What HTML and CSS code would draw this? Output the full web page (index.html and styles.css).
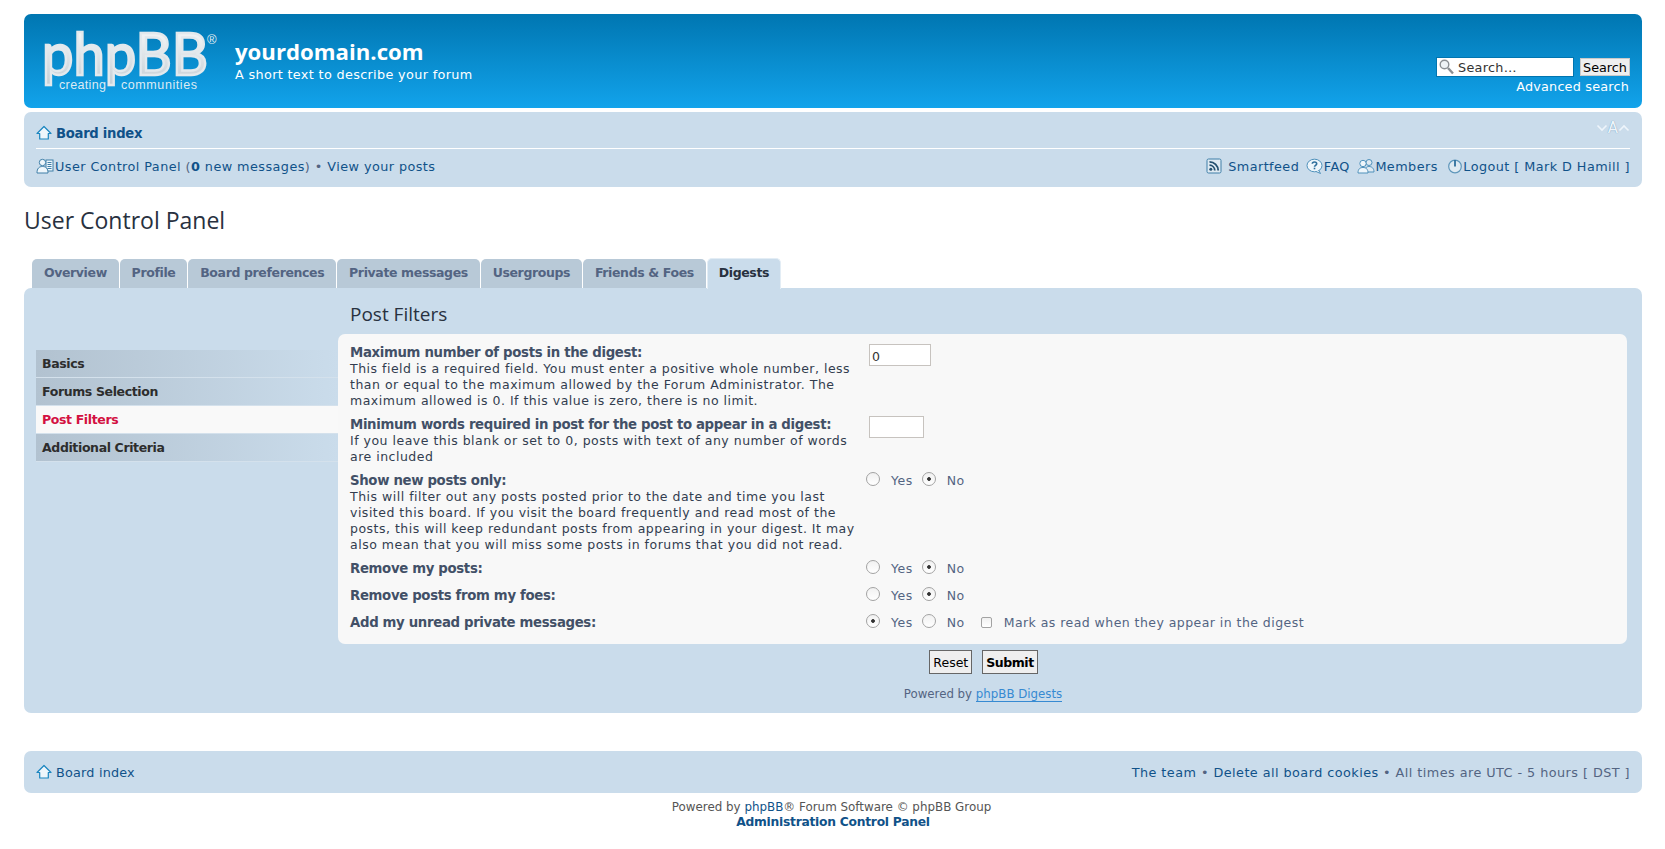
FILE: index.html
```html
<!DOCTYPE html>
<html lang="en">
<head>
    <meta charset="UTF-8">
    <meta name="viewport" content="width=device-width, initial-scale=1.0">
    <title>yourdomain.com - User Control Panel</title>
    <link rel="stylesheet" href="styles.css">
</head>
<body>
    <svg class="sprites" width="0" height="0">
        <symbol id="i-home" viewBox="0 0 16 16">
            <path d="M8 1.500 15 8.500H12.300V14H3.700V8.500H1Z" fill="#eef6fb" stroke="#1a86c0" stroke-width="1.200" stroke-linejoin="round"/>
        </symbol>
        <symbol id="i-ucp" viewBox="0 0 18 16">
            <rect x="10" y="2" width="7" height="11" fill="#eef6fb" stroke="#3f7fa8"/>
            <path d="M11.500 4.500H15.500M11.500 6.500H15.500M11.500 8.500H15.500M11.500 10.500H15.500" stroke="#3f7fa8"/>
            <circle cx="6.500" cy="4.500" r="3.200" fill="#eef6fb" stroke="#3f7fa8"/>
            <path d="M1 15C1 10.500 3 8.500 6.500 8.500S12 10.500 12 15Z" fill="#eef6fb" stroke="#3f7fa8"/>
        </symbol>
        <symbol id="i-rss" viewBox="0 0 16 16">
            <rect x="1" y="1" width="14" height="14" rx="1.500" fill="#dfeaf2" stroke="#3f7fa8"/>
            <circle cx="4.800" cy="11.200" r="1.500" fill="#24506f"/>
            <path d="M3.500 7.200A5.500 5.500 0 0 1 8.800 12.500M3.500 3.800A8.800 8.800 0 0 1 12.200 12.500" fill="none" stroke="#24506f" stroke-width="1.800"/>
        </symbol>
        <symbol id="i-faq" viewBox="0 0 18 16">
            <ellipse cx="8.500" cy="7.500" rx="7.500" ry="6.300" fill="#eef6fb" stroke="#4f91bb"/>
            <path d="M10 13.500 14.500 15.500 12.500 12" fill="#eef6fb" stroke="#4f91bb"/>
            <path d="M6.300 5.800C6.300 3.400 10.700 3.400 10.700 5.800 10.700 7.300 8.500 7.300 8.500 8.800" fill="none" stroke="#2f6f9c" stroke-width="1.600"/>
            <rect x="7.700" y="9.700" width="1.600" height="1.600" fill="#2f6f9c"/>
        </symbol>
        <symbol id="i-members" viewBox="0 0 18 16">
            <circle cx="12" cy="4.500" r="3" fill="#dfeaf2" stroke="#4f91bb"/>
            <path d="M8 14C8 10 9.500 8.500 12 8.500S17 10 17 14Z" fill="#dfeaf2" stroke="#4f91bb"/>
            <circle cx="6" cy="5.500" r="3.200" fill="#eef6fb" stroke="#4f91bb"/>
            <path d="M1 15C1 11 3 9.500 6 9.500S11 11 11 15Z" fill="#eef6fb" stroke="#4f91bb"/>
        </symbol>
        <symbol id="i-logout" viewBox="0 0 16 16">
            <circle cx="8" cy="8.500" r="6.300" fill="#dfeaf2" stroke="#5f97bb" stroke-width="1.200"/>
            <path d="M8 2V8.500" stroke="#2f6f9c" stroke-width="1.800"/>
        </symbol>
    </svg>

    <div class="wrap">
        <header class="headerbar">
            <svg class="logo" width="178" height="76" viewBox="0 -10 178 76" role="img" aria-label="phpBB creating communities">
                <defs>
                    <linearGradient id="logo-fill" x1="0" y1="0" x2="0" y2="1">
                        <stop offset="0" stop-color="#ffffff"/>
                        <stop offset="1" stop-color="#c3cdd4"/>
                    </linearGradient>
                </defs>
                <text class="logo-word" x="-1" y="44" textLength="166" lengthAdjust="spacingAndGlyphs" fill="url(#logo-fill)">phpBB</text>
                <text class="logo-reg" x="164" y="13">®</text>
                <text class="logo-sub" x="16" y="58" textLength="47">creating</text>
                <text class="logo-sub" x="78" y="58" textLength="76">communities</text>
            </svg>
            <div class="site-description">
                <h1>yourdomain.com</h1>
                <p>A short text to describe your forum</p>
            </div>
            <div class="search-box">
                <div class="search-row">
                    <label class="search-field">
                        <svg width="15" height="16" viewBox="0 0 15 16">
                            <circle cx="5.500" cy="5.500" r="4.300" fill="#eef2f5" stroke="#8b8f93" stroke-width="1.400"/>
                            <path d="M9 9 14 14.500" stroke="#8b8f93" stroke-width="2.400"/>
                        </svg>
                        <input type="text" placeholder="Search…">
                    </label>
                    <button class="search-button">Search</button>
                </div>
                <a href="#">Advanced search</a>
            </div>
        </header>

        <nav class="navbar">
            <div class="nav-top">
                <a class="crumb" href="#"><svg class="icon"><use href="#i-home"/></svg>Board index</a>
                <span class="font-size">
                    <svg width="12" height="8" viewBox="0 0 12 8"><path d="M1.500 1.500 6 6 10.500 1.500" fill="none" stroke="#eef5fb" stroke-width="1.600"/></svg>
                    <b>A</b>
                    <svg width="12" height="8" viewBox="0 0 12 8"><path d="M1.500 6.500 6 2 10.500 6.500" fill="none" stroke="#eef5fb" stroke-width="1.600"/></svg>
                </span>
            </div>
            <div class="nav-links">
                <div>
                    <svg class="icon icon-wide icon-ucp"><use href="#i-ucp"/></svg><a href="#">User Control Panel</a>
                    <span class="muted">(<a href="#"><strong>0</strong> new messages</a>) • </span><a href="#">View your posts</a>
                </div>
                <div class="nav-right">
                    <svg class="icon"><use href="#i-rss"/></svg><a class="gap-left" href="#">Smartfeed</a>
                    <svg class="icon icon-wide icon-faq"><use href="#i-faq"/></svg><a href="#">FAQ</a>
                    <svg class="icon icon-wide icon-members"><use href="#i-members"/></svg><a href="#">Members</a>
                    <svg class="icon icon-logout"><use href="#i-logout"/></svg><a href="#">Logout [ Mark D Hamill ]</a>
                </div>
            </div>
        </nav>

        <h2 class="page-title">User Control Panel</h2>

        <ul class="tabs">
            <li class="tab"><a href="#">Overview</a></li>
            <li class="tab"><a href="#">Profile</a></li>
            <li class="tab"><a href="#">Board preferences</a></li>
            <li class="tab"><a href="#">Private messages</a></li>
            <li class="tab"><a href="#">Usergroups</a></li>
            <li class="tab"><a href="#">Friends &amp; Foes</a></li>
            <li class="tab active"><a href="#">Digests</a></li>
        </ul>

        <section class="panel">
            <ul class="side-menu">
                <li><a href="#">Basics</a></li>
                <li><a href="#">Forums Selection</a></li>
                <li class="current"><a href="#">Post Filters</a></li>
                <li><a href="#">Additional Criteria</a></li>
            </ul>

            <div class="main">
                <h3>Post Filters</h3>
                <form class="form-box">
                    <div class="row row-max">
                        <div class="row-label">
                            <strong>Maximum number of posts in the digest:</strong>
                            <span>This field is a required field. You must enter a positive whole number, less than or equal to the maximum allowed by the Forum Administrator. The maximum allowed is 0. If this value is zero, there is no limit.</span>
                        </div>
                        <div><input class="num-input" type="text" value="0"></div>
                    </div>
                    <div class="row row-min">
                        <div class="row-label">
                            <strong>Minimum words required in post for the post to appear in a digest:</strong>
                            <span>If you leave this blank or set to 0, posts with text of any number of words are included</span>
                        </div>
                        <div><input class="num-input short" type="text"></div>
                    </div>
                    <div class="row row-new">
                        <div class="row-label">
                            <strong>Show new posts only:</strong>
                            <span>This will filter out any posts posted prior to the date and time you last visited this board. If you visit the board frequently and read most of the posts, this will keep redundant posts from appearing in your digest. It may also mean that you will miss some posts in forums that you did not read.</span>
                        </div>
                        <div class="choices">
                            <label><input type="radio" name="new"> Yes</label>
                            <label><input type="radio" name="new" checked> No</label>
                        </div>
                    </div>
                    <div class="row row-single">
                        <div class="row-label"><strong>Remove my posts:</strong></div>
                        <div class="choices">
                            <label><input type="radio" name="mine"> Yes</label>
                            <label><input type="radio" name="mine" checked> No</label>
                        </div>
                    </div>
                    <div class="row row-single">
                        <div class="row-label"><strong>Remove posts from my foes:</strong></div>
                        <div class="choices">
                            <label><input type="radio" name="foes"> Yes</label>
                            <label><input type="radio" name="foes" checked> No</label>
                        </div>
                    </div>
                    <div class="row row-single">
                        <div class="row-label"><strong>Add my unread private messages:</strong></div>
                        <div class="choices">
                            <label><input type="radio" name="pm" checked> Yes</label>
                            <label><input type="radio" name="pm"> No</label>
                            <label class="mark"><input type="checkbox"> Mark as read when they appear in the digest</label>
                        </div>
                    </div>
                </form>
                <div class="form-actions">
                    <button type="button">Reset</button>
                    <button type="button" class="primary">Submit</button>
                </div>
                <p class="powered">Powered by <a href="#">phpBB Digests</a></p>
            </div>
        </section>

        <footer class="navbar footbar">
            <a class="foot-index" href="#"><svg class="icon"><use href="#i-home"/></svg>Board index</a>
            <div class="foot-right">
                <a href="#">The team</a> • <a href="#">Delete all board cookies</a> • All times are UTC - 5 hours [ DST ]
            </div>
        </footer>

        <div class="copyright">
            <div>Powered by <a href="#">phpBB</a>® Forum Software © phpBB Group</div>
            <a class="acp" href="#">Administration Control Panel</a>
        </div>
    </div>
</body>
</html>
```

FILE: styles.css
```css
* {
    box-sizing: border-box;
}

body {
    margin: 0;
    font-family: "DejaVu Sans", Verdana, sans-serif;
    font-size: 12.500px;
    color: #536482;
    background-color: #fff;
}

a {
    color: #105289;
    text-decoration: none;
}

.sprites {
    position: absolute;
}

.wrap {
    padding: 14px 23px 0 24px;
}

/* Header */
.headerbar {
    display: flex;
    height: 94px;
    padding: 19px 12px 0 19px;
    color: #fff;
    background: linear-gradient(#0076b1, #12a3eb);
    border-radius: 7px;
}

.logo {
    flex: none;
    margin-top: -12px;
}

.logo-word {
    font-family: Lato, sans-serif;
    font-size: 58px;
    font-weight: 400;
    stroke: #e3e9ed;
    stroke-width: 2.400px;
}

.logo-reg {
    font-family: "Liberation Sans", sans-serif;
    font-size: 13px;
    fill: #e4edf2;
}

.logo-sub {
    font-family: "Liberation Sans", sans-serif;
    font-size: 12.500px;
    fill: #dcebf4;
}

.site-description {
    margin-left: 14px;
    padding-top: 4px;
}

.site-description h1 {
    margin: 0;
    font-family: "Open Sans", sans-serif;
    font-size: 22.200px;
    line-height: 30px;
    font-weight: 700;
}

.site-description p {
    margin: 1px 0 0;
    font-size: 12.800px;
    line-height: 14px;
    letter-spacing: 0.340px;
}

.search-box {
    margin-left: auto;
    padding-top: 24px;
    text-align: right;
}

.search-box a {
    display: block;
    margin-top: 1px;
    padding-right: 1px;
    color: #fff;
    font-size: 12.800px;
    line-height: 18px;
    letter-spacing: 0.200px;
}

.search-row {
    display: flex;
    align-items: center;
    gap: 6px;
    height: 20px;
}

.search-field {
    display: flex;
    align-items: center;
    gap: 4px;
    width: 138px;
    height: 20px;
    padding-left: 2px;
    background-color: #fff;
    border: 1px solid #0075b0;
}

.search-field input {
    width: 112px;
    border: 0;
    padding: 0;
    font: 12.800px "DejaVu Sans", sans-serif;
    letter-spacing: 0.300px;
    background: transparent;
}

.search-field input::placeholder {
    color: #333;
    opacity: 1;
}

.search-button {
    width: 50px;
    height: 18px;
    padding: 0;
    font: 12.800px "DejaVu Sans", sans-serif;
    color: #000;
    background: #efefef;
    border: 1px solid #c9c9c9;
}

/* Nav bars */
.navbar {
    margin-top: 4px;
    padding: 0 12px;
    background-color: #cadceb;
    border-radius: 7px;
}

.icon {
    width: 16px;
    height: 16px;
    vertical-align: -3px;
}

.icon-wide {
    width: 18px;
}

.nav-top {
    display: flex;
    justify-content: space-between;
    height: 37px;
    border-bottom: 1px solid #fff;
}

.crumb {
    padding-top: 13px;
    font-size: 13.200px;
    letter-spacing: -0.290px;
    font-weight: 700;
}

.crumb .icon {
    margin-right: 4px;
}

.font-size {
    display: flex;
    align-items: center;
    align-self: flex-start;
    height: 18px;
    margin-top: 7px;
    color: #eef5fb;
    font-size: 15px;
    text-shadow: 0 0 1px #5f8bb0;
}

.font-size b {
    font-weight: 400;
}

.nav-links {
    display: flex;
    justify-content: space-between;
    height: 38px;
    padding-top: 9px;
    color: #536482;
    font-size: 12.800px;
    letter-spacing: 0.440px;
}

.icon-ucp {
    margin-right: 1px;
}

.nav-right .icon {
    margin-left: 1px;
}

.nav-right .icon-faq {
    margin-left: 2px;
}

.nav-right .icon-members {
    margin-left: 3px;
}

.nav-right .icon-logout {
    margin-left: 5px;
}

.gap-left {
    margin-left: 6px;
}

.muted a strong {
    color: #105289;
}

/* Title and tabs */
.page-title {
    margin: 17px 0 0;
    font-family: "Open Sans", sans-serif;
    font-size: 23px;
    line-height: 32px;
    font-weight: 400;
    color: #28313f;
}

.tabs {
    display: flex;
    align-items: flex-end;
    gap: 1px;
    height: 31px;
    margin: 21px 0 0;
    padding: 0 0 0 8px;
    list-style: none;
}

.tab {
    height: 29px;
    background-color: #b8c9d7;
    border-radius: 5px 5px 0 0;
}

.tab a {
    display: block;
    padding: 6px 11.900px 0;
    font-size: 12.500px;
    letter-spacing: -0.370px;
    font-weight: 700;
    color: #536482;
    white-space: nowrap;
}

.tab.active {
    height: 31px;
    margin-bottom: -1px;
    padding-bottom: 1px;
    background-color: #cadceb;
    border: 1px solid #e3edf5;
    border-bottom: 0;
}

.tab.active a {
    padding: 6px 11px 0;
    color: #28313f;
}

/* Main panel */
.panel {
    display: flex;
    height: 425px;
    padding: 0 15px 0 12px;
    background-color: #cadceb;
    border-radius: 7px;
}

.side-menu {
    flex: none;
    width: 302px;
    margin: 62px 0 0;
    padding: 0;
    list-style: none;
}

.side-menu li {
    height: 28px;
    background: linear-gradient(to right, #b2c2d0, #cadceb);
    border-bottom: 1px solid #d4e1ec;
}

.side-menu a {
    display: block;
    padding: 6px 6px 0;
    font-size: 12.500px;
    letter-spacing: -0.370px;
    font-weight: 700;
    color: #2d2d2d;
}

.side-menu .current {
    background: #f9f9f9;
}

.side-menu .current a {
    color: #d31141;
}

.main {
    flex: 1;
    min-width: 0;
}

.main h3 {
    margin: 0;
    height: 46px;
    padding: 13px 0 0 12px;
    font-family: "Open Sans", sans-serif;
    font-size: 19px;
    line-height: 26px;
    font-weight: 400;
    color: #28313f;
}

.form-box {
    height: 310px;
    padding: 11px 12px 0;
    background-color: #f8f8f8;
    border-radius: 7px;
}

.row {
    display: flex;
}

.row-label {
    flex: none;
    width: 509px;
    margin-right: 10px;
    color: #323d4f;
    line-height: 16px;
}

.row-label strong {
    display: block;
    font-size: 13.300px;
    letter-spacing: -0.340px;
    color: #425067;
}

.row-label span {
    display: block;
    letter-spacing: 0.500px;
}

.row-max {
    height: 72px;
}

.row-min {
    height: 56px;
}

.row-new {
    height: 80px;
}

.row-single {
    height: 27px;
    padding-top: 8px;
}

.num-input {
    display: block;
    width: 62px;
    height: 22px;
    margin-top: -1px;
    padding: 2px 2px 0;
    font: 12.500px "DejaVu Sans", sans-serif;
    color: #333;
    background-color: #fff;
    border: 1px solid #c7c3bf;
}

.short {
    width: 55px;
}

.choices {
    display: flex;
    gap: 9px;
    margin-left: -3px;
    color: #536482;
    line-height: 16px;
    font-size: 12.500px;
    letter-spacing: 0.500px;
}

.choices label {
    display: flex;
    align-items: center;
    gap: 4px;
    height: 16px;
}

.choices .mark {
    margin-left: 7px;
    gap: 5px;
    letter-spacing: 0.450px;
}

.choices input {
    appearance: none;
    flex: none;
    position: relative;
    top: -2px;
    width: 14px;
    height: 14px;
    margin: 0 7px 0 0;
    background: linear-gradient(#f1f1f1, #fff);
    border: 1px solid #a3a3a3;
    border-radius: 50%;
}

.choices input:checked {
    background: radial-gradient(circle, #333 0 1.500px, transparent 2.200px), linear-gradient(#f1f1f1, #fff);
}

.choices input[type="checkbox"] {
    top: -1px;
    width: 11px;
    height: 11px;
    margin-right: 7px;
    border-radius: 2px;
}

.form-actions {
    display: flex;
    justify-content: center;
    gap: 10px;
    height: 24px;
    margin-top: 6px;
    padding-left: 2px;
}

.form-actions button {
    height: 24px;
    padding: 0 3px;
    font: 12.500px "DejaVu Sans", sans-serif;
    color: #000;
    background: #efefef;
    border: 1px solid #666;
}

.form-actions .primary {
    font-size: 12.500px;
    letter-spacing: -0.450px;
    font-weight: 700;
}

.powered {
    margin: 12px 0 0;
    padding-left: 1px;
    text-align: center;
    font-size: 11.800px;
    line-height: 16px;
}

.powered a {
    color: #368ad2;
    border-bottom: 1px solid #368ad2;
}

/* Footer */
.footbar {
    display: flex;
    justify-content: space-between;
    align-items: center;
    height: 42px;
    margin-top: 38px;
    font-size: 12.800px;
}

.foot-index {
    letter-spacing: 0.200px;
}

.foot-index .icon {
    margin-right: 4px;
}

.foot-right {
    letter-spacing: 0.450px;
}

.copyright {
    margin-top: 7px;
    padding-right: 3px;
    text-align: center;
    font-size: 11.900px;
    line-height: 15px;
    color: #555;
}

.acp {
    display: inline-block;
    margin-left: 3px;
    font-weight: 700;
    font-size: 12.300px;
    letter-spacing: -0.260px;
}
```
